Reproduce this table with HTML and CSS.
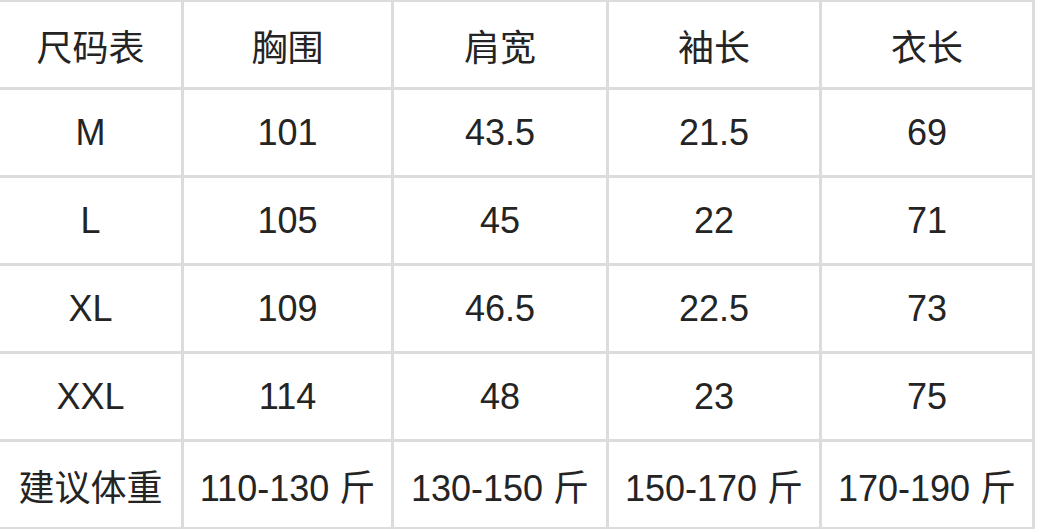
FILE: index.html
```html
<!DOCTYPE html>
<html lang="zh-CN">
<head>
<meta charset="utf-8">
<title>尺码表</title>
<link rel="stylesheet" href="styles.css">
</head>
<body>
<table class="size-table">
  <colgroup>
    <col class="c1"><col class="c2"><col class="c3"><col class="c4"><col class="c5">
  </colgroup>
  <tr><td>尺码表</td><td>胸围</td><td>肩宽</td><td>袖长</td><td>衣长</td></tr>
  <tr><td>M</td><td>101</td><td>43.5</td><td>21.5</td><td>69</td></tr>
  <tr><td>L</td><td>105</td><td>45</td><td>22</td><td>71</td></tr>
  <tr><td>XL</td><td>109</td><td>46.5</td><td>22.5</td><td>73</td></tr>
  <tr><td>XXL</td><td>114</td><td>48</td><td>23</td><td>75</td></tr>
  <tr><td>建议体重</td><td>110-130 斤</td><td>130-150 斤</td><td>150-170 斤</td><td>170-190 斤</td></tr>
</table>
</body>
</html>
```
FILE: styles.css
```css
html, body {
  margin: 0;
  padding: 0;
  background: #ffffff;
  overflow: hidden;
}
.size-table {
  margin: -1px 0 0 -3px;
  width: 1038px;
  table-layout: fixed;
  border-collapse: separate;
  border-spacing: 3px;
  background: #dcdcdc;
  font-family: "Liberation Sans", "Noto Sans CJK SC", sans-serif;
  font-size: 36px;
  color: #242424;
}
.c1 { width: 181px; }
.c2 { width: 207px; }
.c3 { width: 212px; }
.c4 { width: 210px; }
.c5 { width: 210px; }
.size-table td {
  background: #ffffff;
  height: 85px;
  padding: 0;
  text-align: center;
  vertical-align: middle;
  white-space: nowrap;
}
```
